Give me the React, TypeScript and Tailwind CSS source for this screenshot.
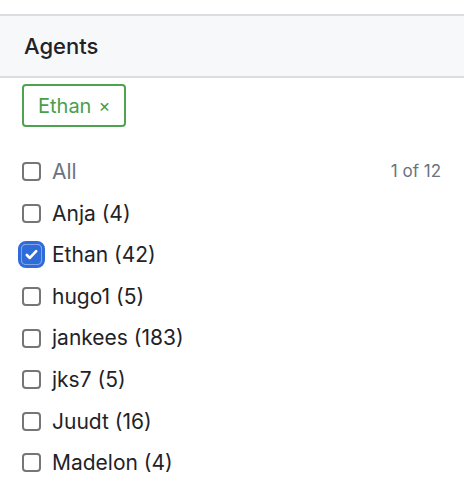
import React, { useState } from 'react';

const agents = [
  { name: 'Anja', count: 4 },
  { name: 'Ethan', count: 42 },
  { name: 'hugo1', count: 5 },
  { name: 'jankees', count: 183 },
  { name: 'jks7', count: 5 },
  { name: 'Juudt', count: 16 },
  { name: 'Madelon', count: 4 },
];

const Box: React.FC<{ checked: boolean }> = ({ checked }) =>
  checked ? (
    <span className="w-[19px] h-[19px] rounded-[4px] bg-[#2f6bd9] flex items-center justify-center shrink-0 outline-[3px] outline-solid outline-[#2f6bd9] outline-offset-[1px] ring-1 ring-[#7fa4ea]">
      <svg width="15" height="15" viewBox="0 0 16 16" fill="none">
        <path d="M3 8.5l3.2 3.2L13 4.5" stroke="white" strokeWidth="2.8" strokeLinecap="round" strokeLinejoin="round" />
      </svg>
    </span>
  ) : (
    <span className="w-[19px] h-[19px] rounded-[4px] border-2 border-[#767676] bg-white shrink-0" />
  );

export default function App() {
  const [selected, setSelected] = useState<string[]>(['Ethan']);
  const toggle = (n: string) =>
    setSelected((s) => (s.includes(n) ? s.filter((x) => x !== n) : [...s, n]));

  return (
    <div className="w-[464px] h-[490px] bg-white overflow-hidden font-['Inter',sans-serif]">
      <div className="h-[14px]" />
      <div className="h-[64px] bg-[#f7f8fa] border-y-2 border-[#dcdde0] flex items-center px-[24px]">
        <h2 className="text-[22px] font-medium text-[#1f2328]">Agents</h2>
      </div>
      <div className="px-[22px] pt-[6px]">
        <div className="inline-flex items-center gap-[7px] h-[43px] w-[104px] px-[14px] border-2 border-[#4fa24f] rounded-[4px] text-[#4a9e4a]">
          <span className="text-[20px]">Ethan</span>
          <span className="text-[18px]">×</span>
        </div>
        <div className="mt-[24px]">
          <div className="h-[41.6px] flex items-center gap-[11px]">
            <Box checked={false} />
            <span className="text-[21px] text-[#6b7280] flex-1">All</span>
            <span className="text-[17px] text-[#6b7280] pr-[1px]">1 of 12</span>
          </div>
          {agents.map((a) => (
            <div key={a.name} className="h-[41.6px] flex items-center gap-[11px] cursor-pointer" onClick={() => toggle(a.name)}>
              <Box checked={selected.includes(a.name)} />
              <span className="text-[21px] text-[#1f2328]">
                {a.name} ({a.count})
              </span>
            </div>
          ))}
        </div>
      </div>
    </div>
  );
}
